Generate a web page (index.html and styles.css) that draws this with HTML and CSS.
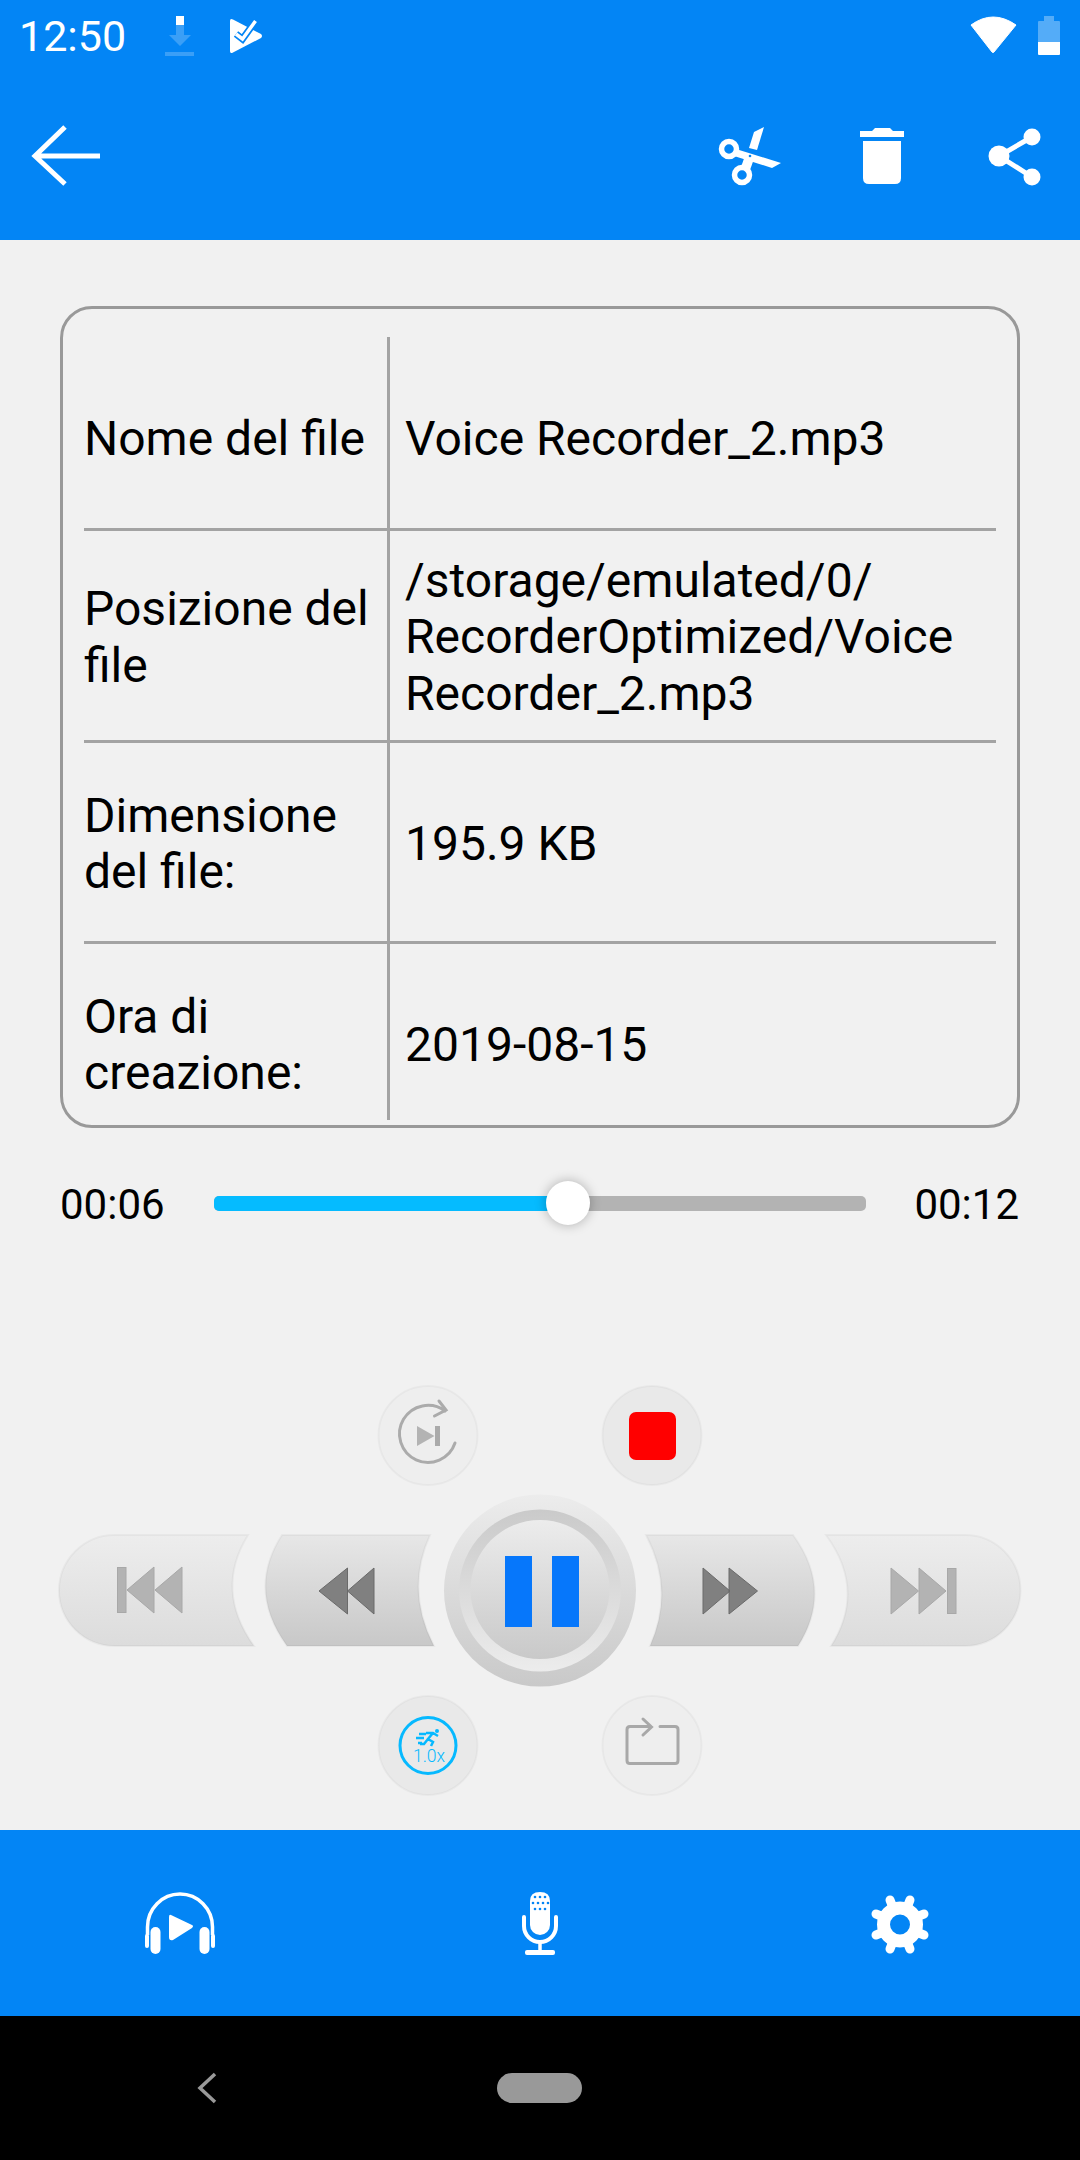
FILE: index.html
```html
<!DOCTYPE html>
<html lang="en">
<head>
    <meta charset="UTF-8">
    <meta name="viewport" content="width=device-width, initial-scale=1.0">
    <title>Voice Recorder</title>
    <link rel="stylesheet" href="styles.css">
</head>
<body>
    <div class="top">
        <div class="status">
            <span class="clock">12:50</span>
            <svg class="ic-download" width="30" height="44" viewBox="165 14 30 44">
                <rect x="176" y="16" width="8" height="9" fill="#fff"/>
                <path d="M176 25h8v10h7l-11 11-11-11h7z" fill="#fff" fill-opacity=".22"/>
                <rect x="165" y="52" width="29" height="4" fill="#fff" fill-opacity=".22"/>
            </svg>
            <svg class="ic-play" width="34" height="36" viewBox="230 18 34 36">
                <path d="M230 21q0-3 3-1.500l28 14.500q2 2 0 4l-28 14.500q-3 1.500-3-1.500z" fill="#fff"/>
                <path d="M236 34l6.500 5 13-18" fill="none" stroke="#0385f5" stroke-width="7"/>
                <path d="M236 34l6.500 5 13-18" fill="none" stroke="#fff" stroke-width="3.500"/>
            </svg>
            <span class="spacer"></span>
            <svg class="ic-wifi" width="48" height="40" viewBox="970 16 48 40">
                <path d="M971 25q22-16 45 0l-22 27q-1 1-2 0z" fill="#fff" stroke="#fff" stroke-width="1" stroke-linejoin="round"/>
            </svg>
            <svg class="ic-battery" width="26" height="40" viewBox="1036 16 26 40">
                <path d="M1044 16h10v5h5q1 0 1 1v20h-22v-20q0-1 1-1h5z" fill="#fff" fill-opacity=".32"/>
                <path d="M1038 42h22v12q0 1-1 1h-20q-1 0-1-1z" fill="#fff"/>
            </svg>
        </div>
        <div class="toolbar">
            <svg width="76" height="68" viewBox="28 122 76 68">
                <path d="M65 127L35 156l30 28M35 156h65" fill="none" stroke="#fff" stroke-width="5"/>
            </svg>
            <span class="spacer"></span>
            <svg class="ic-cut" width="68" height="64" viewBox="716 124 68 64">
                <circle cx="729" cy="149" r="7.500" fill="none" stroke="#fff" stroke-width="5.500"/>
                <circle cx="742" cy="175" r="7.500" fill="none" stroke="#fff" stroke-width="5.500"/>
                <path d="M736 149l45 14-9 5-38-12z" fill="#fff"/>
                <path d="M741 167l5-14 9 3-5 14z" fill="#fff"/>
                <path d="M749 148l5-16 10-5-7 23z" fill="#fff"/>
                <circle cx="750" cy="156" r="1.300" fill="#0385f5"/>
            </svg>
            <svg class="ic-trash" width="52" height="64" viewBox="856 124 52 64">
                <path d="M860 131h12l3-3h15l3 3h11v6h-44z" fill="#fff"/>
                <path d="M863 141h38v37q0 6-6 6h-26q-6 0-6-6z" fill="#fff"/>
            </svg>
            <svg class="ic-share" width="58" height="64" viewBox="986 124 58 64">
                <path d="M1032 137l-33 19 33 21" fill="none" stroke="#fff" stroke-width="5"/>
                <circle cx="999" cy="156" r="10.500" fill="#fff"/>
                <circle cx="1032" cy="137" r="8.500" fill="#fff"/>
                <circle cx="1032" cy="177" r="8.500" fill="#fff"/>
            </svg>
        </div>
    </div>

    <div class="main">
        <div class="card">
            <div class="row row-name">
                <div class="cell">Nome del file</div>
                <div class="cell val">Voice Recorder_2.mp3</div>
            </div>
            <div class="row row-path">
                <div class="cell">Posizione del file</div>
                <div class="cell val">/storage/emulated/0/<br>RecorderOptimized/Voice<br>Recorder_2.mp3</div>
            </div>
            <div class="row row-size">
                <div class="cell">Dimensione del file:</div>
                <div class="cell val">195.9 KB</div>
            </div>
            <div class="row row-date">
                <div class="cell">Ora di creazione:</div>
                <div class="cell val">2019-08-15</div>
            </div>
        </div>

        <div class="seek">
            <span class="time">00:06</span>
            <div class="track">
                <div class="fill"></div>
                <div class="thumb"></div>
            </div>
            <span class="time">00:12</span>
        </div>

        <svg class="controls" width="1080" height="470" viewBox="0 1360 1080 470">
            <defs>
                <linearGradient id="soft" x1="0" y1="0" x2="0" y2="1">
                    <stop offset="0" stop-color="#ededed"/>
                    <stop offset="1" stop-color="#dcdcdc"/>
                </linearGradient>
                <linearGradient id="hard" x1="0" y1="0" x2="0" y2="1">
                    <stop offset="0" stop-color="#e7e7e7"/>
                    <stop offset="1" stop-color="#c8c8c8"/>
                </linearGradient>
                <linearGradient id="ringUp" x1="0" y1="0" x2="0" y2="1">
                    <stop offset="0" stop-color="#cacaca"/>
                    <stop offset="1" stop-color="#ececec"/>
                </linearGradient>
                <linearGradient id="disc" x1="0" y1="0" x2="0" y2="1">
                    <stop offset="0" stop-color="#ececec"/>
                    <stop offset="1" stop-color="#c9c9c9"/>
                </linearGradient>
            </defs>

            <!-- small round buttons -->
            <g stroke="#000" stroke-opacity=".03" stroke-width="2">
                <circle cx="428" cy="1435.500" r="49.500" fill="#eeeeee"/>
                <circle cx="652" cy="1435.500" r="49.500" fill="#e9e9e9"/>
                <circle cx="428" cy="1745.500" r="49.500" fill="#e9e9e9"/>
                <circle cx="652" cy="1745.500" r="49.500" fill="#eeeeee"/>
            </g>

            <!-- play next once -->
            <path d="M455 1443a28.500 28.500 0 1 1-10-32" fill="none" stroke="#ababab" stroke-width="3" stroke-linecap="round"/>
            <path d="M439 1401l7 9-11.500 6" fill="none" stroke="#ababab" stroke-width="3" stroke-linecap="round"/>
            <path d="M417 1426l17.500 10-17.500 10z" fill="#b3b3b3"/>
            <rect x="435" y="1426" width="5" height="20" fill="#aaa"/>

            <!-- stop -->
            <rect x="629" y="1412" width="47" height="48" rx="7" fill="#f00"/>

            <!-- speed -->
            <circle cx="428" cy="1745.500" r="28" fill="none" stroke="#06b9ff" stroke-width="3"/>
            <g fill="none" stroke="#06b9ff" stroke-width="2.500">
                <path d="M426 1733h7l5 3M433 1733l-5 6 5 3-2 4M428 1739l-4 5h-4M416 1738h8M419 1734h7M418 1743h4"/>
            </g>
            <circle cx="437" cy="1731" r="2" fill="#06b9ff"/>
            <text class="speed" x="429" y="1762" text-anchor="middle">1.0x</text>

            <!-- repeat -->
            <path d="M660 1726.500h15q3 0 3 3v31q0 3-3 3h-45q-3 0-3-3v-31q0-3 3-3h21M643 1719l8.500 8-8.500 8" fill="none" stroke="#a8a8a8" stroke-width="3" stroke-linecap="round"/>

            <!-- transport pills -->
            <g stroke="#000" stroke-opacity=".035" stroke-width="2">
                <path d="M114.500 1535H248Q214 1590 254 1646H114.500A55.500 55.500 0 0 1 114.500 1535Z" fill="url(#soft)"/>
                <path d="M282 1535H430Q405 1590 434 1646H287Q246.500 1590 282 1535Z" fill="url(#hard)"/>
                <path d="M646 1535H793Q833.500 1590 798 1646H650Q675 1590 646 1535Z" fill="url(#hard)"/>
                <path d="M826 1535H965A55.500 55.500 0 0 1 965 1646H831Q866.500 1590 826 1535Z" fill="url(#soft)"/>
            </g>

            <g fill="#b3b3b3" stroke="#a8a8a8">
                <rect x="117.500" y="1567.500" width="8.500" height="45"/>
                <path d="M127 1590l27-23v46zM155 1590l27-23v46z"/>
                <path d="M891 1568v46l27.500-23zM919 1568v46l27-23z"/>
                <rect x="947.500" y="1568.500" width="8.500" height="45"/>
            </g>
            <g fill="#808080" stroke="#6a6a6a">
                <path d="M319 1591l28.500-23v46zM347.500 1591l26.500-23v46z"/>
                <path d="M703 1568v46l27-23zM729 1568v46l28.500-23z"/>
            </g>

            <!-- main button -->
            <circle cx="540" cy="1590.500" r="96" fill="url(#disc)"/>
            <circle cx="540" cy="1590.500" r="81" fill="url(#ringUp)"/>
            <circle cx="540" cy="1589.500" r="69.500" fill="url(#disc)"/>
            <rect x="505" y="1556" width="27" height="71" fill="#0677fb"/>
            <rect x="552" y="1556" width="27" height="71" fill="#0677fb"/>
        </svg>
    </div>

    <div class="tabs">
        <svg width="80" height="70" viewBox="140 1888 80 70">
            <path d="M147.500 1935v-8a32.500 33 0 0 1 65 0v8" fill="none" stroke="#fff" stroke-width="3.500"/>
            <rect x="145" y="1934" width="4" height="14" rx="2" fill="#fff"/>
            <rect x="211" y="1934" width="4" height="14" rx="2" fill="#fff"/>
            <rect x="150.500" y="1927" width="10" height="27" rx="5" fill="#fff"/>
            <rect x="199.500" y="1927" width="10" height="27" rx="5" fill="#fff"/>
            <path d="M171 1915l21 10q2 1 0 3l-19 12q-4 1-4-3v-20q0-3 2-2z" fill="#fff"/>
        </svg>
        <svg width="50" height="70" viewBox="515 1888 50 70">
            <path d="M530 1901q0-9 10-9t10 9v24a10 10 0 0 1-20 0z" fill="#fff"/>
            <g fill="#0385f5">
                <circle cx="535" cy="1897" r="1.300"/><circle cx="540" cy="1897" r="1.300"/><circle cx="545" cy="1897" r="1.300"/>
                <circle cx="533" cy="1903" r="1.300"/><circle cx="538" cy="1903" r="1.300"/><circle cx="543" cy="1903" r="1.300"/><circle cx="548" cy="1903" r="1.300"/>
                <circle cx="535" cy="1909" r="1.300"/><circle cx="540" cy="1909" r="1.300"/><circle cx="545" cy="1909" r="1.300"/>
            </g>
            <path d="M524 1917v9a16 16 0 0 0 32 0v-9" fill="none" stroke="#fff" stroke-width="4" stroke-linecap="round"/>
            <path d="M540 1942v10" stroke="#fff" stroke-width="3.500"/>
            <rect x="525" y="1950" width="30" height="5" rx="2" fill="#fff"/>
        </svg>
        <svg width="70" height="70" viewBox="865 1888 70 70">
            <circle cx="900" cy="1924.500" r="16.500" fill="none" stroke="#fff" stroke-width="13"/>
            <g stroke="#fff" stroke-width="9" stroke-linecap="round">
                <path d="M908 1905l2-5M892 1905l-2-5M908 1944l2 5M892 1944l-2 5M881 1916l-5-2M919 1916l5-2M881 1933l-5 2M919 1933l5 2"/>
            </g>
        </svg>
    </div>

    <div class="sysnav">
        <svg class="ic-navback" width="32" height="40" viewBox="190 2068 32 40">
            <path d="M215 2074l-15 14 15 14" fill="none" stroke="#999" stroke-width="3.500"/>
        </svg>
        <div class="home"></div>
    </div>
</body>
</html>
```

FILE: styles.css
```css
body {
    margin: 0;
    width: 1080px;
    height: 2160px;
    display: flex;
    flex-direction: column;
    background-color: #f1f1f1;
    font-family: Roboto, sans-serif;
    color: #000;
    overflow: hidden;
}
svg {
    display: block;
}
.spacer {
    flex: 1;
}
.top {
    background-color: #0385f5;
}
.status {
    display: flex;
    align-items: center;
    height: 72px;
    padding: 0 18px 0 19px;
}
.clock {
    width: 146px;
    color: #fff;
    font-size: 43px;
    line-height: 72px;
}
.ic-play {
    margin-left: 35px;
}
.ic-battery {
    margin-left: 18px;
}
.toolbar {
    display: flex;
    align-items: center;
    height: 168px;
    padding: 0 36px 0 28px;
}
.ic-trash {
    margin-left: 72px;
}
.ic-share {
    margin-left: 78px;
}
.main {
    flex: 1;
    display: flex;
    flex-direction: column;
}
.card {
    margin: 66px 60px 0;
    height: 822px;
    box-sizing: border-box;
    padding: 28px 21px 5px;
    border: 3px solid #999;
    border-radius: 32px;
    font-size: 48px;
    line-height: 56.5px;
}
.row {
    display: grid;
    grid-template-columns: 303px 1fr;
    box-sizing: border-box;
    border-bottom: 3px solid #a3a3a3;
}
.cell {
    display: flex;
    align-items: center;
}
.val {
    border-left: 3px solid #a3a3a3;
    padding-left: 15px;
}
.row-name {
    height: 194px;
}
.row-name .cell {
    padding-top: 13px;
}
.row-path {
    height: 212px;
}
.row-path .cell {
    padding-top: 4px;
}
.row-size {
    height: 201px;
}
.row-size .cell {
    padding-top: 4px;
}
.row-date {
    height: 176px;
    border-bottom: 0;
}
.row-date .cell {
    padding-top: 26px;
}
.seek {
    display: flex;
    align-items: center;
    justify-content: space-between;
    height: 60px;
    margin-top: 46px;
    padding: 0 61px 0 60px;
}
.time {
    font-size: 42px;
    line-height: 60px;
    padding-top: 2px;
}
.track {
    position: relative;
    top: -1px;
    width: 652px;
    height: 15px;
    border-radius: 5px;
    background-color: #b3b3b3;
}
.fill {
    width: 355px;
    height: 15px;
    border-radius: 5px 0 0 5px;
    background-color: #05bbff;
}
.thumb {
    position: absolute;
    left: 332px;
    top: -15px;
    width: 44px;
    height: 44px;
    border-radius: 50%;
    background-color: #fff;
    box-shadow: 0 0 12px rgba(0, 0, 0, .28);
}
.controls {
    margin-top: auto;
}
.speed {
    font-family: Roboto, sans-serif;
    font-size: 17.5px;
    font-weight: 300;
    fill: #06b9ff;
}
.tabs {
    display: grid;
    grid-template-columns: repeat(3, 1fr);
    align-items: center;
    justify-items: center;
    height: 186px;
    background-color: #0385f5;
}
.sysnav {
    display: flex;
    align-items: center;
    height: 144px;
    padding-left: 190px;
    background-color: #000;
}
.home {
    width: 85px;
    height: 30px;
    margin-left: 275px;
    border-radius: 15px;
    background-color: #999;
}
```
